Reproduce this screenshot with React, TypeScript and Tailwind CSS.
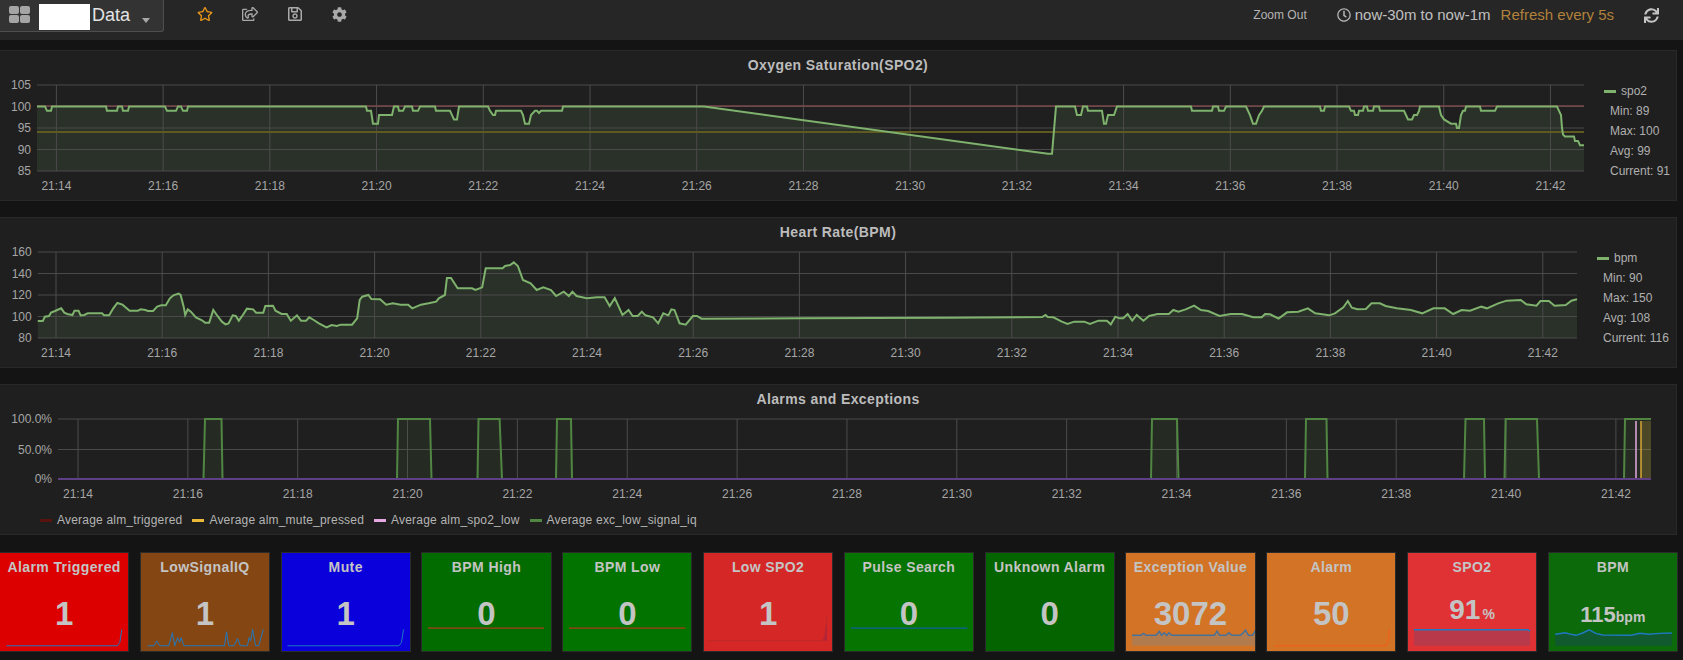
import { FaCog, FaRegClock, FaRegSave, FaRegShareSquare, FaRegStar, FaSync } from "react-icons/fa";

type Pt = [number, number];

const pts = (list: Pt[]) => list.map(([x, y]) => `${x},${y}`).join(" ");

// spo2 is written as [page x, percent], 4.3px per percent above y=171
const spo2Raw: Pt[] = [
  [37, 100], [45, 100], [47, 99], [51, 99], [52, 100], [106, 100], [107, 99], [117, 99], [118, 100], [122, 100], [123, 99], [128, 99], [129, 100],
  [165, 100], [167, 99], [176, 99], [178, 100], [181, 100], [183, 99], [187, 99], [188, 100], [366, 100], [367, 99], [371, 99], [373, 96],
  [378, 96], [379, 98], [392, 98], [394, 100], [398, 100], [399, 99], [403, 99], [405, 100], [412, 100], [413, 99], [418, 99], [420, 100],
  [435, 100], [436, 99], [450, 99], [452, 98], [454, 97], [457, 97], [459, 100], [488, 100], [490, 99], [493, 98], [495, 98], [496, 99],
  [521, 99], [523, 98], [525, 96], [529, 96], [531, 98], [535, 99], [537, 99], [539, 98.5], [541, 99], [546, 99], [548, 99], [562, 99], [563, 100],
  [704, 100], [1048, 89], [1052, 89], [1056, 100], [1075, 100], [1077, 98], [1081, 98], [1083, 100], [1087, 100], [1088, 99], [1102, 99],
  [1104, 96], [1106, 96], [1108, 98], [1114, 98], [1117, 100], [1191, 100], [1192, 99], [1212, 99], [1213, 100], [1218, 100], [1219, 99],
  [1224, 99], [1226, 100], [1246, 100], [1250, 98], [1253, 96], [1256, 96], [1259, 98], [1262, 99], [1264, 100], [1320, 100], [1321, 99],
  [1324, 99], [1325, 100], [1349, 100], [1351, 99], [1354, 99], [1355, 98], [1358, 98], [1359, 99], [1363, 99], [1364, 100], [1367, 100],
  [1368, 99], [1373, 99], [1374, 100], [1379, 100], [1380, 99], [1404, 99], [1407, 97.5], [1408, 97], [1412, 97], [1414, 98], [1417, 98],
  [1419, 99], [1420, 100], [1439, 100], [1441, 98], [1444, 97], [1451, 96], [1456, 96], [1457, 95], [1459, 95], [1461, 98], [1463, 99],
  [1465, 99], [1466, 100], [1480, 100], [1481, 99], [1495, 99], [1497, 100], [1557, 100], [1559, 99], [1561, 98], [1562, 95], [1563, 93.5],
  [1565, 93], [1574, 93], [1575, 92], [1578, 92], [1580, 91], [1584, 91],
];
const spo2: Pt[] = spo2Raw.map(([x, v]) => [x, 171 - (v - 85) * 4.3]);

// heart rate was read off two crops, so each part has its own scale
const bpmLeft: Pt[] = [
  [74, 333], [84, 333], [88, 320], [96, 318], [100, 308], [108, 303], [112, 300], [120, 295], [126, 308], [132, 312], [142, 315], [146, 302],
  [154, 302], [158, 316], [165, 315], [172, 310], [200, 310], [204, 316], [214, 316], [222, 295], [230, 279], [240, 284], [246, 292], [254, 302],
  [270, 302], [276, 298], [285, 300], [290, 303], [300, 303], [308, 290], [316, 286], [325, 286], [333, 265], [340, 256], [350, 251], [354, 255],
  [360, 290], [363, 315], [368, 298], [374, 305], [384, 322], [395, 330], [402, 338], [410, 338], [418, 300], [425, 315], [435, 335], [442, 343],
  [448, 340], [456, 316], [462, 318], [468, 332], [476, 315], [484, 296], [496, 298], [502, 308], [516, 308], [520, 288], [535, 287], [540, 302],
  [552, 312], [562, 312], [570, 332], [582, 316], [590, 332], [600, 332], [606, 322], [615, 330], [625, 340], [640, 352], [650, 345], [660, 348],
  [668, 344], [690, 344], [700, 325], [705, 270], [710, 260], [722, 255], [728, 267], [745, 268], [757, 284], [770, 280], [785, 284], [800, 284],
  [808, 295], [825, 284], [840, 280], [855, 275], [860, 265], [872, 255], [876, 204], [884, 204], [897, 235], [925, 235], [932, 240], [945, 232],
  [952, 175], [985, 175], [990, 168], [1000, 165], [1007, 157], [1015, 168], [1025, 210], [1040, 220], [1052, 240], [1065, 232], [1080, 240],
  [1090, 258], [1105, 245], [1115, 258], [1122, 245], [1130, 258], [1150, 265], [1170, 262], [1185, 262], [1195, 288], [1205, 264], [1220, 315],
  [1232, 300], [1240, 318], [1250, 318], [1258, 305], [1265, 316], [1280, 322], [1290, 340], [1300, 310], [1310, 316], [1316, 298], [1322, 300],
  [1332, 340], [1344, 344], [1358, 318], [1366, 318], [1375, 326], [1568, 325],
];
const bpmRight: Pt[] = [
  [0, 325], [260, 323], [430, 321], [436, 315], [440, 321], [450, 322], [465, 335], [475, 342], [487, 335], [505, 335], [515, 342], [530, 332],
  [545, 332], [552, 343], [560, 320], [567, 325], [574, 325], [582, 312], [590, 332], [598, 315], [610, 332], [620, 318], [635, 312], [655, 312],
  [663, 300], [672, 305], [685, 298], [700, 287], [712, 300], [725, 303], [745, 318], [765, 312], [785, 312], [805, 322], [820, 322], [826, 312],
  [835, 313], [850, 326], [865, 307], [885, 305], [902, 295], [915, 310], [940, 316], [950, 310], [965, 292], [973, 273], [980, 293], [990, 298],
  [1005, 297], [1015, 280], [1030, 280], [1040, 288], [1060, 295], [1085, 300], [1105, 310], [1125, 295], [1145, 295], [1160, 312], [1175, 300],
  [1190, 302], [1210, 290], [1220, 295], [1240, 280], [1255, 272], [1280, 270], [1290, 283], [1308, 287], [1315, 273], [1330, 273], [1340, 287],
  [1360, 285], [1370, 272], [1380, 268],
];
const bpm: Pt[] = [
  ...bpmLeft.map(([x, y]): Pt => [x / 1.96, 210 + y / 3]),
  ...bpmRight.map(([x, y]): Pt => [800 + x / 1.776, 210 + y / 3]),
];

const pulses: number[][] = [
  [203.5, 205, 221.5, 222.5],
  [397, 398, 430, 431.5],
  [477.5, 478.5, 499.6, 502],
  [556, 557, 571, 572],
  [1151, 1152, 1177, 1178.5],
  [1305, 1306, 1326.5, 1327.5],
  [1464, 1465.5, 1484, 1485],
  [1504.5, 1505.6, 1537, 1539],
];

const minutes = [14, 16, 18, 20, 22, 24, 26, 28, 30, 32, 34, 36, 38, 40, 42];

function Grid({
  x1, x2, top, bottom, tickAt, labelY, yTicks,
}: {
  x1: number; x2: number; top: number; bottom: number; tickAt: (i: number) => number; labelY: number;
  yTicks: { label: string; y: number }[];
}) {
  return (
    <>
      {yTicks.map((t) => (
        <g key={t.label}>
          <line x1={x1} x2={x2} y1={t.y} y2={t.y} stroke="#4a4a4a" />
          <text x={x1 - 6} y={t.y + 4} textAnchor="end" fontSize="12" fill="#a6a6a6">{t.label}</text>
        </g>
      ))}
      {minutes.map((m, i) => (
        <g key={m}>
          <line x1={tickAt(i)} x2={tickAt(i)} y1={top} y2={bottom} stroke="#4c4c4c" />
          <text x={tickAt(i)} y={labelY} textAnchor="middle" fontSize="12" fill="#a6a6a6">{`21:${m}`}</text>
        </g>
      ))}
    </>
  );
}

function Legend({ name, stats }: { name: string; stats: string[] }) {
  return (
    <div className="pt-[6px] text-xs leading-5 text-[#b0b0b0]">
      <div className="flex items-center gap-[5px] -ml-[6px]">
        <span className="h-[3px] w-3 bg-[#7eb26d]" />
        <span>{name}</span>
      </div>
      {stats.map((s) => <div key={s}>{s}</div>)}
    </div>
  );
}

function Title({ children }: { children: string }) {
  return (
    <div className="flex h-6 items-center justify-center pt-1 text-sm font-bold tracking-[0.4px] text-[#bcbcbc]">
      {children}
    </div>
  );
}

function OxygenPanel() {
  const top = 75;
  return (
    <section className="mt-[10px] h-[151px] w-[1677px] border border-l-0 border-[#292929] bg-[#1f1f1f]">
      <Title>Oxygen Saturation(SPO2)</Title>
      <div className="flex">
        <svg className="h-[125px] w-[1610px] shrink-0" viewBox={`0 ${top} 1610 125`}>
          <polygon points={`37,171 ${pts(spo2)} 1584,171`} fill="#7eb26d" fillOpacity="0.12" />
          <Grid
            x1={37} x2={1584} top={85} bottom={171} labelY={190}
            tickAt={(i) => 56.4 + i * 106.72}
            yTicks={[
              { label: "105", y: 85 }, { label: "100", y: 106.5 }, { label: "95", y: 128 }, { label: "90", y: 149.5 }, { label: "85", y: 171 },
            ]}
          />
          <line x1={37} x2={1584} y1={106} y2={106} stroke="#7a4a4e" strokeWidth="1.5" />
          <line x1={37} x2={1584} y1={132} y2={132} stroke="#5e5a20" strokeWidth="2" />
          <polyline points={pts(spo2)} fill="none" stroke="#7eb26d" strokeWidth="2" />
        </svg>
        <Legend name="spo2" stats={["Min: 89", "Max: 100", "Avg: 99", "Current: 91"]} />
      </div>
    </section>
  );
}

function HeartPanel() {
  const top = 242;
  return (
    <section className="mt-4 h-[151px] w-[1677px] border border-l-0 border-[#292929] bg-[#1f1f1f]">
      <Title>Heart Rate(BPM)</Title>
      <div className="flex">
        <svg className="h-[125px] w-[1603px] shrink-0" viewBox={`0 ${top} 1603 125`}>
          <polygon points={`37.7,338 ${pts(bpm)} 1577,338`} fill="#7eb26d" fillOpacity="0.12" />
          <Grid
            x1={37.7} x2={1577} top={252} bottom={338} labelY={357}
            tickAt={(i) => 56 + i * 106.2}
            yTicks={[
              { label: "160", y: 252 }, { label: "140", y: 273.5 }, { label: "120", y: 295 }, { label: "100", y: 316.5 }, { label: "80", y: 338 },
            ]}
          />
          <polyline points={pts(bpm)} fill="none" stroke="#7eb26d" strokeWidth="2" />
        </svg>
        <Legend name="bpm" stats={["Min: 90", "Max: 150", "Avg: 108", "Current: 116"]} />
      </div>
    </section>
  );
}

const alarmLegend = [
  { label: "Average alm_triggered", swatch: "bg-[#58140c]" },
  { label: "Average alm_mute_pressed", swatch: "bg-[#eab839]" },
  { label: "Average alm_spo2_low", swatch: "bg-[#e5a8e2]" },
  { label: "Average exc_low_signal_iq", swatch: "bg-[#508642]" },
];

function AlarmPanel() {
  const top = 409;
  return (
    <section className="mt-4 h-[151px] w-[1677px] border border-l-0 border-[#292929] bg-[#1f1f1f]">
      <Title>Alarms and Exceptions</Title>
      <svg className="block h-[99px] w-[1676px]" viewBox={`0 ${top} 1676 99`}>
        <Grid
          x1={58} x2={1651} top={419} bottom={479} labelY={498}
          tickAt={(i) => 78 + i * 109.85}
          yTicks={[{ label: "100.0%", y: 419 }, { label: "50.0%", y: 449.5 }, { label: "0%", y: 479 }]}
        />
        {pulses.map((p) => (
          <polygon
            key={p[0]}
            points={`${p[0]},479 ${p[1]},419 ${p[2]},419 ${p[3]},479`}
            fill="#508642" fillOpacity="0.12" stroke="#508642" strokeWidth="2"
          />
        ))}
        <polygon points="1624,479 1625,419 1651,419 1651,479" fill="#508642" fillOpacity="0.12" />
        <polyline points="1624,479 1625,419 1651,419" fill="none" stroke="#508642" strokeWidth="2" />
        <rect x={1641} y={421} width={10} height={58} fill="#eab839" fillOpacity="0.2" />
        <line x1={1636} x2={1636} y1={421} y2={479} stroke="#e5a8e2" strokeWidth="1.5" />
        <line x1={1641} x2={1641} y1={421} y2={479} stroke="#d9a636" strokeWidth="1.5" />
        <line x1={58} x2={1651} y1={479} y2={479} stroke="#5f3f85" strokeWidth="2" />
      </svg>
      <div className="flex h-6 items-center gap-[10px] pl-[40px] text-xs tracking-[0.2px] text-[#b4b4b4]">
        {alarmLegend.map((l) => (
          <div key={l.label} className="flex items-center gap-[5px]">
            <span className={`h-[3px] w-3 ${l.swatch}`} />
            <span>{l.label}</span>
          </div>
        ))}
      </div>
    </section>
  );
}

type Spark = { line: Pt[]; stroke: string; width?: number; fill?: string; base?: number };

const zoomL = (list: Pt[]) => list.map(([x, y]): Pt => [x / 2.8, 380 + y / 3]);
const zoomM = (list: Pt[]) => list.map(([x, y]): Pt => [560 + x / 2.8, 540 + y / 3]);
const zoomR = (list: Pt[]) => list.map(([x, y]): Pt => [1120 + x / 2.785, 380 + y / 3]);

type Stat = {
  title: string; value: string; unit?: string; valueClass?: string; unitClass?: string; rowClass?: string; bg: string; spark?: Spark;
};

const stats: Stat[] = [
  {
    title: "Alarm Triggered", value: "1", bg: "bg-[#dc0000]",
    spark: { line: zoomL([[15, 800], [330, 800], [337, 790], [343, 750]]), stroke: "#1f78c1", width: 1 },
  },
  {
    title: "LowSignalIQ", value: "1", bg: "bg-[#844714]",
    spark: {
      line: zoomL([[410, 800], [428, 800], [436, 785], [444, 800], [470, 800], [480, 760], [487, 800], [495, 775], [501, 790], [505, 775], [513, 800], [628, 800], [634, 757], [640, 800], [655, 800], [665, 778], [673, 800], [693, 800], [698, 775], [702, 785], [708, 750], [716, 800], [725, 800], [738, 750]]),
      stroke: "#1f78c1", width: 1,
    },
  },
  {
    title: "Mute", value: "1", bg: "bg-[#0a00dc]",
    spark: { line: zoomL([[801, 800], [1117, 800], [1124, 790], [1130, 750]]), stroke: "#1f78c1", width: 1 },
  },
  {
    title: "BPM High", value: "0", bg: "bg-[#036c00]",
    spark: { line: zoomL([[1196, 746], [1525, 746]]), stroke: "#7b4a11", width: 2 },
  },
  {
    title: "BPM Low", value: "0", bg: "bg-[#037300]",
    spark: { line: zoomM([[22, 266], [352, 266]]), stroke: "#7b4a11", width: 2 },
  },
  {
    title: "Low SPO2", value: "1", bg: "bg-[#d62727]",
    spark: { line: zoomM([[415, 304], [735, 304], [741, 290], [748, 230]]), stroke: "#bf2a2a", width: 1, fill: "#b3243a", base: 641.5 },
  },
  {
    title: "Pulse Search", value: "0", bg: "bg-[#057400]",
    spark: { line: zoomM([[810, 266], [1140, 266]]), stroke: "#0e6470", width: 2 },
  },
  { title: "Unknown Alarm", value: "0", bg: "bg-[#046400]" },
  {
    title: "Exception Value", value: "3072", bg: "bg-[#d37326]",
    spark: {
      line: zoomR([[30, 768], [55, 768], [62, 762], [70, 768], [98, 768], [107, 756], [113, 768], [120, 760], [128, 768], [134, 760], [142, 768], [262, 768], [270, 755], [277, 768], [295, 768], [303, 760], [312, 768], [335, 768], [342, 762], [350, 752], [358, 768], [370, 768], [380, 750]]),
      stroke: "#46729a", width: 1.5, fill: "#b27b4e", base: 646.7,
    },
  },
  {
    title: "Alarm", value: "50", bg: "bg-[#d37326]",
    spark: { line: zoomR([[425, 800], [740, 800], [746, 790], [750, 750]]), stroke: "#e8641a", width: 1.5 },
  },
  {
    title: "SPO2", value: "91", unit: "%", valueClass: "text-[28px]", unitClass: "ml-[2px] text-sm", rowClass: "mt-[13px]", bg: "bg-[#e03135]",
    spark: { line: zoomR([[813, 751], [1135, 751], [1141, 755]]), stroke: "#1f78c1", width: 1.5, fill: "#b83a4a", base: 646.7 },
  },
  {
    title: "BPM", value: "115", unit: "bpm", valueClass: "text-[22px]", unitClass: "text-sm", rowClass: "mt-[18px]", bg: "bg-[#0d6a0b]",
    spark: {
      line: zoomR([[1206, 765], [1235, 760], [1250, 765], [1265, 768], [1285, 760], [1302, 751], [1320, 762], [1340, 767], [1420, 768], [1445, 762], [1470, 765], [1500, 762], [1535, 761]]),
      stroke: "#1f78c1", width: 1.5, fill: "#115a30", base: 646.7,
    },
  },
];

function StatCard({ stat, index }: { stat: Stat; index: number }) {
  const { spark } = stat;
  const x0 = index * 140.7 - 1;
  return (
    <div className={`relative h-[100px] overflow-hidden border border-[#2b2b2b] text-center font-bold text-[#c4c4c4] ${stat.bg}`}>
      {spark && (
        <svg className="absolute inset-0 h-full w-full" viewBox={`${x0} 552 130 100`} preserveAspectRatio="none">
          {spark.fill && (
            <polygon
              points={`${spark.line[0][0]},${spark.base} ${pts(spark.line)} ${spark.line[spark.line.length - 1][0]},${spark.base}`}
              fill={spark.fill}
            />
          )}
          <polyline points={pts(spark.line)} fill="none" stroke={spark.stroke} strokeWidth={spark.width} />
        </svg>
      )}
      <div className="relative pt-[4px] text-sm leading-5 tracking-[0.4px]">{stat.title}</div>
      <div className={`relative flex h-10 items-baseline justify-center leading-10 ${stat.rowClass ?? "mt-[17px]"}`}>
        <span className={stat.valueClass ?? "text-[33px]"}>{stat.value}</span>
        {stat.unit && <span className={stat.unitClass}>{stat.unit}</span>}
      </div>
    </div>
  );
}

function TopBar() {
  return (
    <header className="flex h-10 items-start bg-[#262626] text-[#c8c8c8]">
      <div className="flex h-8 w-[164px] shrink-0 items-start rounded-br-[3px] border-r border-b border-[#4e4e4e] bg-[#333333]">
        <svg className="ml-[9px] mt-[6px] shrink-0" width="21" height="17" viewBox="0 0 21 17" fill="#a5a5a5">
          <rect width="10" height="8" rx="2" />
          <rect x="11" width="10" height="8" rx="2" />
          <rect y="9" width="10" height="8" rx="2" />
          <rect x="11" y="9" width="10" height="8" rx="2" />
        </svg>
        <div className="ml-[9px] mt-1 h-[26px] w-[51px] shrink-0 bg-white" />
        <span className="ml-[2px] mt-[3px] text-lg leading-6 text-[#e3e3e3]">Data</span>
        <svg className="ml-[12px] mt-[18px] shrink-0" width="8" height="5" viewBox="0 0 8 5">
          <polygon points="0,0 8,0 4,5" fill="#a8a8a8" />
        </svg>
      </div>
      <div className="ml-[33px] mt-[6px] flex items-center gap-[29px] text-[#a9a9a9]">
        <FaRegStar className="text-[#e8961b]" size={16} />
        <FaRegShareSquare size={16} />
        <FaRegSave size={16} />
        <FaCog size={15} />
      </div>
      <div className="ml-auto flex h-[30px] items-center">
        <span className="text-xs text-[#b4b4b4]">Zoom Out</span>
        <FaRegClock className="ml-[30px] text-[#b4b4b4]" size={14} />
        <span className="ml-[4px] text-[15px] text-[#c0c0c0]">now-30m to now-1m</span>
        <span className="ml-[10px] text-[15px] text-[#b0823b]">Refresh every 5s</span>
        <FaSync className="ml-[30px] mr-[24px] text-[#c4c4c4]" size={15} />
      </div>
    </header>
  );
}

export default function App() {
  return (
    <div className="h-[660px] overflow-hidden bg-[#141414] font-['Liberation_Sans',sans-serif]">
      <TopBar />
      <OxygenPanel />
      <HeartPanel />
      <AlarmPanel />
      <div className="mt-[17px] -ml-px grid w-[1679px] grid-cols-12 gap-x-[10.5px]">
        {stats.map((s, i) => <StatCard key={s.title} stat={s} index={i} />)}
      </div>
    </div>
  );
}
